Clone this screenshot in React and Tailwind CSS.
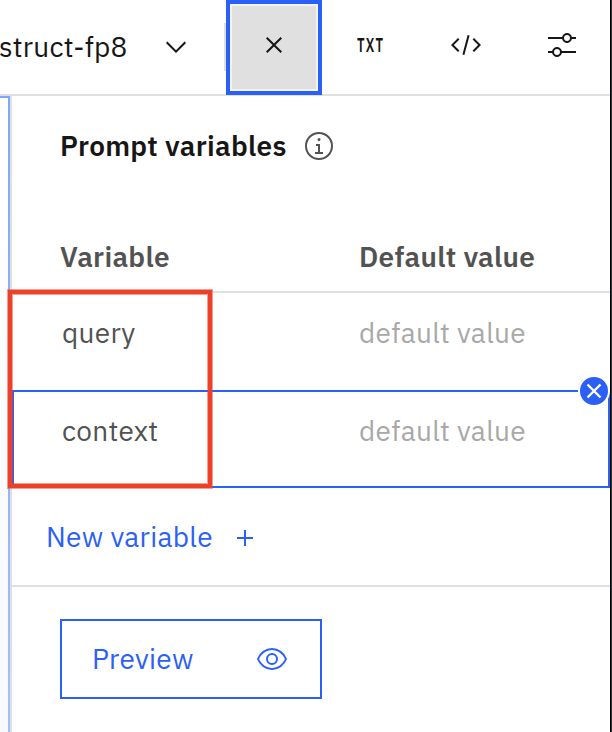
import React from "react";

const ICONS = {
  chevron: "M16 22L6 12 7.4 10.6 16 19.2 24.6 10.6 26 12z",
  close:
    "M17.414 16L24 9.414 22.586 8 16 14.586 9.414 8 8 9.414 14.586 16 8 22.586 9.414 24 16 17.414 22.586 24 24 22.586z",
  code: "M31 16L24 23 22.59 21.59 28.17 16 22.59 10.41 24 9zM1 16L8 9 9.41 10.41 3.83 16 9.41 21.59 8 23zM12.419 25.484L17.639 6 19.57 6.518 14.35 26z",
  adjust:
    "M30 8h-4.1c-.5-2.3-2.5-4-4.9-4s-4.4 1.7-4.9 4H2v2h14.1c.5 2.3 2.5 4 4.9 4s4.4-1.7 4.9-4H30V8zM21 12c-1.7 0-3-1.3-3-3s1.3-3 3-3 3 1.3 3 3-1.3 3-3 3zM2 24h4.1c.5 2.3 2.5 4 4.9 4s4.4-1.7 4.9-4H30v-2H15.9c-.5-2.3-2.5-4-4.9-4s-4.4 1.7-4.9 4H2v2zM11 20c1.7 0 3 1.3 3 3s-1.3 3-3 3-3-1.3-3-3 1.3-3 3-3z",
  info: "M17 22V14h-4v2h2v6h-3v2h8v-2zM16 8a1.5 1.5 0 1 0 1.5 1.5A1.5 1.5 0 0 0 16 8zM16 30A14 14 0 1 1 30 16 14 14 0 0 1 16 30ZM16 4A12 12 0 1 0 28 16 12 12 0 0 0 16 4Z",
  add: "M17 15V8h-2v7H8v2h7v7h2v-7h7v-2z",
  view: "M30.94 15.66A16.69 16.69 0 0 0 16 5 16.69 16.69 0 0 0 1.06 15.66a1 1 0 0 0 0 .68A16.69 16.69 0 0 0 16 27 16.69 16.69 0 0 0 30.94 16.34a1 1 0 0 0 0-.68ZM16 25c-5.3 0-10.9-3.93-12.93-9C5.1 10.93 10.7 7 16 7s10.9 3.93 12.93 9C26.9 21.07 21.3 25 16 25ZM16 10a6 6 0 1 0 6 6 6 6 0 0 0-6-6Zm0 10a4 4 0 1 1 4-4 4 4 0 0 1-4 4Z",
};

function Icon({ name, className = "" }) {
  return (
    <svg viewBox="0 0 32 32" fill="currentColor" className={`size-8 shrink-0 ${className}`}>
      <path d={ICONS[name]} />
    </svg>
  );
}

function Toolbar() {
  return (
    <header className="flex h-24 shrink-0 border-b-2 border-[#e0e0e0] text-[#161616]">
      <div className="flex w-[226px] items-center">
        <span className="-ml-px w-[161px] whitespace-nowrap tracking-[0.25px]">struct-fp8</span>
        <Icon name="chevron" />
        <span className="ml-auto h-12 w-0.5 bg-[#e0e0e0]" />
      </div>
      <button className="z-10 -mb-px flex h-[95px] w-24 items-center justify-center border-4 border-[#2b60f6] bg-[#e0e0e0] pb-1.5 shadow-[inset_0_0_0_2px_#f4f4f4]">
        <Icon name="close" />
      </button>
      <button className="flex h-[88px] w-24 items-center justify-center">
        <span className="scale-x-[0.62] pl-0.5 text-[21px] font-semibold tracking-[2px]">TXT</span>
      </button>
      <button className="flex h-[90px] w-24 items-center justify-center">
        <Icon name="code" />
      </button>
      <button className="flex h-[90px] w-24 items-center justify-center">
        <Icon name="adjust" />
      </button>
    </header>
  );
}

function Row({ name, active }) {
  return (
    <div
      className={
        active
          ? "relative flex h-[98px] border-2 border-[#2b60f6] pl-12 pt-[21px]"
          : "flex h-[97px] pl-[50px] pt-[22px]"
      }
    >
      <span className="w-[297px] leading-9 tracking-[0.32px] text-[#525252]">{name}</span>
      <span className="leading-9 tracking-[0.32px] text-[#a8a8a8]">default value</span>
      {active && (
        <button className="absolute -right-0.5 -top-[17px] flex size-8 items-center justify-center rounded-full border-2 border-white bg-[#2b60f6] text-white">
          <svg viewBox="0 0 28 28" className="size-7 shrink-0" fill="none" stroke="currentColor" strokeWidth="2.4">
            <path d="M7.5 7.5l13 13M20.5 7.5l-13 13" />
          </svg>
        </button>
      )}
    </div>
  );
}

export default function App() {
  return (
    <div className="relative flex h-[732px] w-[612px] overflow-hidden bg-white font-['IBM_Plex_Sans',Roboto,sans-serif] text-[28px] leading-9">
      <div className="flex w-[610px] flex-col">
        <Toolbar />
        <div className="flex min-h-0 flex-1">
          <aside className="flex w-2.5 shrink-0 bg-linear-to-b from-[#7fa6fa] to-[#a4bffb] pr-0.5 pt-0.5">
            <div className="flex-1 bg-linear-to-b from-white to-[#f7f9ff]" />
          </aside>
          <main className="flex flex-1 flex-col border-l-2 border-[#e0e0e0]">
            <div className="flex h-[100px] items-center pl-12">
              <h1 className="w-[243px] whitespace-nowrap font-semibold tracking-[0.3px] text-[#161616]">Prompt variables</h1>
              <Icon name="info" className="text-[#525252]" />
            </div>
            <div className="flex h-[97px] border-b-2 border-[#e0e0e0] pl-12 pt-[43px] font-semibold tracking-[0.3px] text-[#525252]">
              <span className="w-[299px]">Variable</span>
              <span>Default value</span>
            </div>
            <Row name="query" />
            <Row name="context" active />
            <button className="flex h-[99px] items-center border-b-2 border-[#e0e0e0] pl-[34px] text-left text-[#2b60f6]">
              <span className="w-[183px] whitespace-nowrap tracking-[0.32px]">New variable</span>
              <Icon name="add" className="relative top-px" />
            </button>
            <button className="ml-12 mt-8 flex h-20 w-[262px] items-center justify-between border-2 border-[#2b60f6] pl-[30px] pr-8 text-[#2b60f6]">
              <span className="tracking-[0.32px]">Preview</span>
              <Icon name="view" />
            </button>
          </main>
        </div>
      </div>
      <div className="w-0.5 border-l border-black bg-[#30343b]" />
      <div className="pointer-events-none absolute left-2 top-[290px] z-20 h-[198px] w-[204px] border-4 border-[#ec4028] shadow-[0_0_0_1px_#ec402880,inset_0_0_0_1px_#ec402880]" />
    </div>
  );
}
